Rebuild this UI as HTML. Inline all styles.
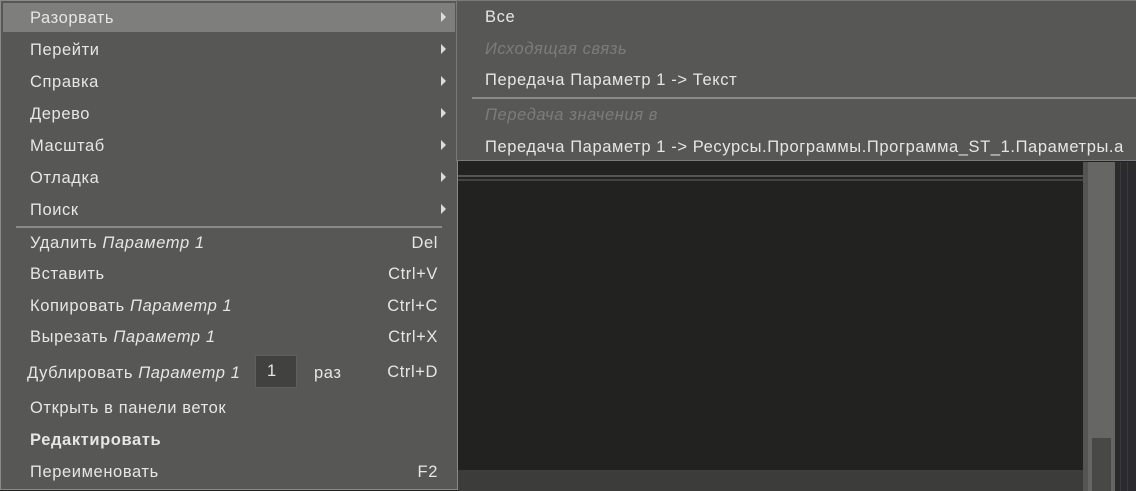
<!DOCTYPE html>
<html><head><meta charset="utf-8"><style>
body{margin:0;width:1136px;height:491px;overflow:hidden;background:#222220;position:relative;font-family:"Liberation Sans",sans-serif;font-size:16.5px;letter-spacing:0.6px;color:#e6e6e6}
.a{position:absolute}
.menu{left:0;top:0;width:456px;height:488px;background:#575755;border:1px solid #8a8a88}
.it{position:absolute;left:29px;height:20px;line-height:20px;white-space:nowrap}
.sc{position:absolute;right:19px;height:20px;line-height:20px}
.ar{position:absolute;left:440px;width:0;height:0;border-top:5px solid transparent;border-bottom:5px solid transparent;border-left:5px solid #ddd}
i{font-style:italic}
.sub{left:456px;top:0;width:679px;height:159px;background:#575755;border:1px solid #7a7a78}
.dis{color:#7c7c7a}
</style></head><body>
<div class="a" style="left:458px;top:162px;width:625px;height:308px;background:#222220"></div>
<div class="a" style="left:458px;top:175px;width:625px;height:2px;background:#555"></div>
<div class="a" style="left:458px;top:179px;width:625px;height:2px;background:#444"></div>
<div class="a" style="left:458px;top:470px;width:625px;height:21px;background:#3c3c3b"></div>
<div class="a" style="left:1083px;top:162px;width:5px;height:329px;background:#555553"></div>
<div class="a" style="left:1088px;top:162px;width:27px;height:329px;background:#666664"></div>
<div class="a" style="left:1092px;top:438px;width:19px;height:53px;background:#484847"></div>
<div class="a" style="left:1115px;top:162px;width:21px;height:329px;background:#2b2b2e"></div>
<div class="a" style="left:1120px;top:162px;width:1px;height:329px;background:#3a3a3e"></div>
<div class="a" style="left:1127px;top:162px;width:1px;height:329px;background:#3a3a3e"></div>

<div class="a menu">
<div class="a" style="left:2px;top:2px;width:452px;height:29px;background:#7e7e7c"></div>
<div class="it" style="top:7px">Разорвать</div><div class="ar" style="top:11px"></div>
<div class="it" style="top:39px">Перейти</div><div class="ar" style="top:43px"></div>
<div class="it" style="top:71px">Справка</div><div class="ar" style="top:75px"></div>
<div class="it" style="top:103px">Дерево</div><div class="ar" style="top:107px"></div>
<div class="it" style="top:135px">Масштаб</div><div class="ar" style="top:139px"></div>
<div class="it" style="top:167px">Отладка</div><div class="ar" style="top:171px"></div>
<div class="it" style="top:199px">Поиск</div><div class="ar" style="top:203px"></div>
<div class="a" style="left:15px;top:225px;width:426px;height:2px;background:#8a8a88"></div>
<div class="it" style="top:232px">Удалить <i>Параметр 1</i></div><div class="sc" style="top:232px">Del</div>
<div class="it" style="top:263px">Вставить</div><div class="sc" style="top:263px">Ctrl+V</div>
<div class="it" style="top:295px">Копировать <i>Параметр 1</i></div><div class="sc" style="top:295px">Ctrl+C</div>
<div class="it" style="top:326px">Вырезать <i>Параметр 1</i></div><div class="sc" style="top:326px">Ctrl+X</div>
<div class="it" style="top:362px;left:26px">Дублировать <i>Параметр 1</i></div>
<div class="a" style="left:254px;top:354px;width:42px;height:33px;background:#414140;border:1px solid #5f5f5d;box-sizing:border-box;line-height:31px;padding-left:11px">1</div>
<div class="it" style="top:362px;left:313px">раз</div>
<div class="sc" style="top:361px">Ctrl+D</div>
<div class="it" style="top:397px">Открыть в панели веток</div>
<div class="it" style="top:429px;font-weight:bold">Редактировать</div>
<div class="it" style="top:461px">Переименовать</div><div class="sc" style="top:461px">F2</div>
</div>

<div class="a sub">
<div class="it" style="left:28px;top:6px">Все</div>
<div class="it dis" style="left:28px;top:38px"><i>Исходящая связь</i></div>
<div class="it" style="left:28px;top:69px">Передача Параметр 1 -&gt; Текст</div>
<div class="a" style="left:15px;top:96px;width:664px;height:2px;background:#8a8a88"></div>
<div class="it dis" style="left:28px;top:104px"><i>Передача значения в</i></div>
<div class="it" style="left:28px;top:136px">Передача Параметр 1 -&gt; Ресурсы.Программы.Программа_ST_1.Параметры.a</div>
</div>
</body></html>
